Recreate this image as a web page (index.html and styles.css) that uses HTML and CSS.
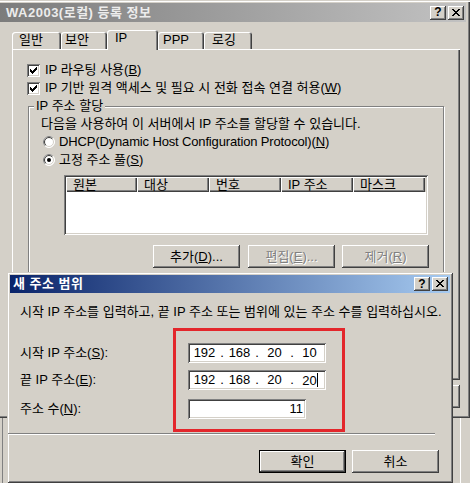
FILE: index.html
```html
<!DOCTYPE html>
<html lang="ko">
<head>
<meta charset="utf-8">
<title>WA2003(로컬) 등록 정보</title>
<link rel="stylesheet" href="styles.css">
</head>
<body>
<div class="win">
  <div class="caption inactive">
    <span class="caption-text">WA2003(로컬) 등록 정보</span>
    <span class="cap-btns">
      <span class="cap-btn">?</span>
      <span class="cap-btn"><svg width="8" height="7" viewBox="0 0 8 7"><path d="M0 0h2v1h-2zM6 0h2v1h-2zM1 1h2v1h-2zM5 1h2v1h-2zM2 2h4v1h-4zM3 3h2v1h-2zM2 4h4v1h-4zM1 5h2v1h-2zM5 5h2v1h-2zM0 6h2v1h-2zM6 6h2v1h-2z" fill="#000"/></svg></span>
    </span>
  </div>
  <div class="tabs">
    <div class="tab t1">일반</div>
    <div class="tab t2">보안</div>
    <div class="tab sel">IP</div>
    <div class="tab t4">PPP</div>
    <div class="tab t5">로깅</div>
  </div>
  <div class="panel">
    <div class="row">
      <span class="chk"><svg width="13" height="13" viewBox="0 0 13 13"><path d="M3 5h1v3h-1zM4 6h1v3h-1zM5 7h1v3h-1zM6 6h1v3h-1zM7 5h1v3h-1zM8 4h1v3h-1zM9 3h1v3h-1z" fill="#000"/></svg></span>
      <span>IP 라우팅 사용(<u>B</u>)</span>
    </div>
    <div class="row">
      <span class="chk"><svg width="13" height="13" viewBox="0 0 13 13"><path d="M3 5h1v3h-1zM4 6h1v3h-1zM5 7h1v3h-1zM6 6h1v3h-1zM7 5h1v3h-1zM8 4h1v3h-1zM9 3h1v3h-1z" fill="#000"/></svg></span>
      <span>IP 기반 원격 액세스 및 필요 시 전화 접속 연결 허용(<u>W</u>)</span>
    </div>
    <fieldset class="group">
      <legend>IP 주소 할당</legend>
      <div class="row">다음을 사용하여 이 서버에서 IP 주소를 할당할 수 있습니다.</div>
      <div class="row radio-row">
        <svg class="radio" width="12" height="12" viewBox="0 0 12 12">
          <circle cx="6" cy="6" r="5.5" fill="#fff" stroke="#fff"/>
          <path d="M2.1 9.9A5.5 5.5 0 0 1 9.9 2.1" fill="none" stroke="#808080"/>
          <circle cx="6" cy="6" r="4.5" fill="#fff" stroke="#d4d0c8"/>
          <path d="M2.8 9.2A4.5 4.5 0 0 1 9.2 2.8" fill="none" stroke="#404040"/>
        </svg>
        <span class="latin">DHCP(Dynamic Host Configuration Protocol)(<u>N</u>)</span>
      </div>
      <div class="row radio-row">
        <svg class="radio" width="12" height="12" viewBox="0 0 12 12">
          <circle cx="6" cy="6" r="5.5" fill="#fff" stroke="#fff"/>
          <path d="M2.1 9.9A5.5 5.5 0 0 1 9.9 2.1" fill="none" stroke="#808080"/>
          <circle cx="6" cy="6" r="4.5" fill="#fff" stroke="#d4d0c8"/>
          <path d="M2.8 9.2A4.5 4.5 0 0 1 9.2 2.8" fill="none" stroke="#404040"/>
          <circle cx="6" cy="6" r="2" fill="#000"/>
        </svg>
        <span>고정 주소 풀(<u>S</u>)</span>
      </div>
      <div class="list">
        <div class="list-head">
          <div class="col c1">원본</div>
          <div class="col">대상</div>
          <div class="col">번호</div>
          <div class="col">IP 주소</div>
          <div class="col">마스크</div>
        </div>
      </div>
      <div class="btn-row">
        <div class="btn b-add">추가(<u>D</u>)...</div>
        <div class="btn disabled b-edit">편집(<u>E</u>)...</div>
        <div class="btn disabled">제거(<u>R</u>)</div>
      </div>
    </fieldset>
  </div>
  <div class="win-btns">
    <div class="btn small">확인</div>
    <div class="btn small">취소</div>
    <div class="btn small">적용(<u>A</u>)</div>
  </div>
</div>
<div class="under"></div>

<div class="dlg">
  <div class="caption active">
    <span class="caption-text">새 주소 범위</span>
    <span class="cap-btns">
      <span class="cap-btn">?</span>
      <span class="cap-btn"><svg width="8" height="7" viewBox="0 0 8 7"><path d="M0 0h2v1h-2zM6 0h2v1h-2zM1 1h2v1h-2zM5 1h2v1h-2zM2 2h4v1h-4zM3 3h2v1h-2zM2 4h4v1h-4zM1 5h2v1h-2zM5 5h2v1h-2zM0 6h2v1h-2zM6 6h2v1h-2z" fill="#000"/></svg></span>
    </span>
  </div>
  <div class="desc">시작 IP 주소를 입력하고, 끝 IP 주소 또는 범위에 있는 주소 수를 입력하십시오.</div>
  <div class="form">
    <div class="labels">
      <div class="lbl l1">시작 IP 주소(<u>S</u>):</div>
      <div class="lbl l2">끝 IP 주소(<u>E</u>):</div>
      <div class="lbl l3">주소 수(<u>N</u>):</div>
    </div>
    <div class="redbox">
      <div class="ip i1"><span class="seg">192</span><span class="dot">.</span><span class="seg">168</span><span class="dot">.</span><span class="seg">20</span><span class="dot">.</span><span class="seg">10</span></div>
      <div class="ip i2"><span class="seg">192</span><span class="dot">.</span><span class="seg">168</span><span class="dot">.</span><span class="seg">20</span><span class="dot">.</span><span class="seg">20<span class="caret"></span></span></div>
      <div class="num">11</div>
    </div>
  </div>
  <div class="sep"></div>
  <div class="dlg-btns">
    <div class="btn default">확인</div>
    <div class="btn">취소</div>
  </div>
</div>
</body>
</html>
```
FILE: styles.css
```css
* { box-sizing: border-box; }
html, body { margin: 0; padding: 0; }
body {
  width: 470px;
  height: 483px;
  overflow: hidden;
  position: relative;
  background: #d4d0c8;
  font-family: "Liberation Sans", "Noto Sans CJK KR", sans-serif;
  font-size: 13px;
  line-height: 14px;
  color: #000;
}
u { text-decoration: underline; text-underline-offset: 1px; }

/* outer window */
.win {
  width: 470px;
  height: 418px;
  padding: 3px 4px 3px 0;
  background: #d4d0c8;
  box-shadow: inset 0 1px #d4d0c8, inset 0 2px #fff, inset -1px -1px #404040, inset -2px -2px #808080;
  display: flex;
  flex-direction: column;
}
.caption {
  height: 19px;
  display: flex;
  align-items: center;
  justify-content: space-between;
  padding: 0 2px 0 6px;
  flex-shrink: 0;
}
.caption.inactive {
  background: linear-gradient(to right, #7c7c7c, #c2c2c2);
  color: #ececec;
}
.caption.active {
  height: 18px;
  padding-left: 3px;
  background: linear-gradient(to right, #0a246a, #a6caf0);
  color: #fff;
}
.caption-text { font-weight: bold; letter-spacing: 0.5px; }
.cap-btns { display: flex; gap: 2px; }
.cap-btn {
  width: 16px;
  height: 14px;
  background: #d4d0c8;
  box-shadow: inset -1px -1px #404040, inset 1px 1px #fff, inset -2px -2px #808080;
  display: flex;
  align-items: center;
  justify-content: center;
  color: #000;
  font-weight: bold;
  font-size: 12px;
  line-height: 12px;
  letter-spacing: 0;
  padding-bottom: 1px;
}

/* tabs */
.tabs {
  display: flex;
  align-items: flex-end;
  margin: 8px 0 0 12px;
  height: 19px;
  position: relative;
  z-index: 1;
  flex-shrink: 0;
}
.tab {
  height: 17px;
  padding-top: 1px;
  background: #d4d0c8;
  box-shadow: inset 1px 1px #fff, inset -1px 0 #404040, inset -2px 0 #808080;
  border-radius: 3px 3px 0 0;
}
.t1 { width: 49px; padding-left: 7px; }
.t2 { width: 46px; padding-left: 4px; }
.tab.sel { width: 51px; height: 20px; margin-bottom: -1px; padding-left: 8px; }
.t4 { width: 46px; padding-left: 5px; }
.t5 { width: 48px; padding-left: 8px; }

/* tab panel */
.panel {
  margin-left: 12px;
  width: 448px;
  height: 331px;
  flex-shrink: 0;
  box-shadow: inset 1px 1px #fff, inset -1px -1px #404040, inset -2px -2px #808080;
  padding: 12px 0 0 15px;
}
.row {
  height: 18px;
  display: flex;
  align-items: center;
  white-space: nowrap;
}
.chk {
  width: 13px;
  height: 13px;
  margin-right: 5px;
  background: #fff;
  box-shadow: inset 1px 1px #808080, inset -1px -1px #fff, inset 2px 2px #404040, inset -2px -2px #d4d0c8;
  display: block;
  flex-shrink: 0;
}
.chk svg { display: block; }

.group {
  margin: 2px 0 0 1px;
  width: 416px;
  height: 280px;
  border: 1px solid #808080;
  box-shadow: inset 1px 1px #fff, 1px 1px #fff;
  padding: 2px 12px 0 12px;
  min-width: 0;
}
.group legend {
  margin-left: -7px;
  padding: 0 2px;
  line-height: 14px;
  background: #d4d0c8;
}
.radio-row .radio { margin: 0 4px 0 2px; flex-shrink: 0; }
.latin { letter-spacing: -0.15px; }

.list {
  margin: 6px 0 0 23px;
  width: 364px;
  height: 60px;
  background: #fff;
  box-shadow: inset 1px 1px #808080, inset -1px -1px #fff, inset 2px 2px #404040, inset -2px -2px #d4d0c8;
  padding: 2px;
}
.list-head {
  display: flex;
  height: 15px;
  background: #d4d0c8;
}
.col {
  width: 72px;
  padding-left: 7px;
  line-height: 15px;
  box-shadow: inset 1px 1px #fff, inset -1px -1px #404040, inset -2px -2px #808080;
}
.col.c1 { width: 71px; }

.btn-row {
  display: flex;
  margin: 10px 0 0 112px;
}
.btn {
  width: 87px;
  height: 23px;
  display: flex;
  align-items: center;
  justify-content: center;
  background: #d4d0c8;
  box-shadow: inset -1px -1px #404040, inset 1px 1px #fff, inset -2px -2px #808080;
  white-space: nowrap;
}
.b-add { margin-right: 8px; }
.b-edit { margin-right: 7px; }
.btn.disabled { color: #808080; text-shadow: 1px 1px 0 #fff; }
.btn.default {
  box-shadow: inset 0 0 0 1px #000, inset -2px -2px #404040, inset 2px 2px #fff, inset -3px -3px #808080;
}

.win-btns {
  display: flex;
  justify-content: flex-end;
  gap: 6px;
  margin-top: 5px;
  padding-right: 6px;
}
.btn.small { width: 75px; }

.under {
  height: 65px;
  border-left: 1px solid #808080;
  margin-left: 2px;
  box-shadow: inset -9px 0 #d4d0c8, inset -10px 0 #fff, inset -11px 0 #d4d0c8;
}

/* nested dialog (window on top) */
.dlg {
  position: absolute;
  left: 7px;
  top: 272px;
  width: 446px;
  height: 211px;
  padding: 3px;
  background: #d4d0c8;
  box-shadow: inset 1px 1px #d4d0c8, inset -1px -1px #404040, inset 2px 2px #fff, inset -2px -2px #808080;
}
.desc {
  margin: 12px 0 0 10px;
  white-space: nowrap;
}
.form {
  display: flex;
  margin-top: 9px;
}
.labels {
  width: 163px;
  padding: 15px 0 0 10px;
}
.lbl { height: 20px; line-height: 20px; white-space: nowrap; }
.l2 { margin-top: 7px; }
.l3 { margin-top: 9px; }
.redbox {
  width: 172px;
  border: 3px solid #e3262b;
  padding: 12px 16px 10px 12px;
}
.ip, .num {
  width: 138px;
  height: 20px;
  background: #fff;
  box-shadow: inset 1px 1px #808080, inset -1px -1px #fff, inset 2px 2px #404040, inset -2px -2px #d4d0c8;
  display: flex;
  align-items: center;
  padding: 0 1px;
}
.i2 { margin-top: 7px; }
.num {
  width: 118px;
  margin-top: 9px;
  justify-content: flex-end;
  padding-right: 3px;
}
.seg { width: 31px; text-align: center; }
.dot { width: 4px; text-align: center; }
.caret {
  display: inline-block;
  width: 0;
  height: 14px;
  border-right: 1px solid #000;
  vertical-align: -2px;
  margin-right: -1px;
}
.sep {
  margin: 1px 0 0 -2px;
  width: 427px;
  height: 2px;
  border-top: 1px solid #808080;
  border-bottom: 1px solid #fff;
}
.dlg-btns {
  display: flex;
  justify-content: flex-end;
  gap: 6px;
  margin-top: 15px;
  padding-right: 11px;
}
```
